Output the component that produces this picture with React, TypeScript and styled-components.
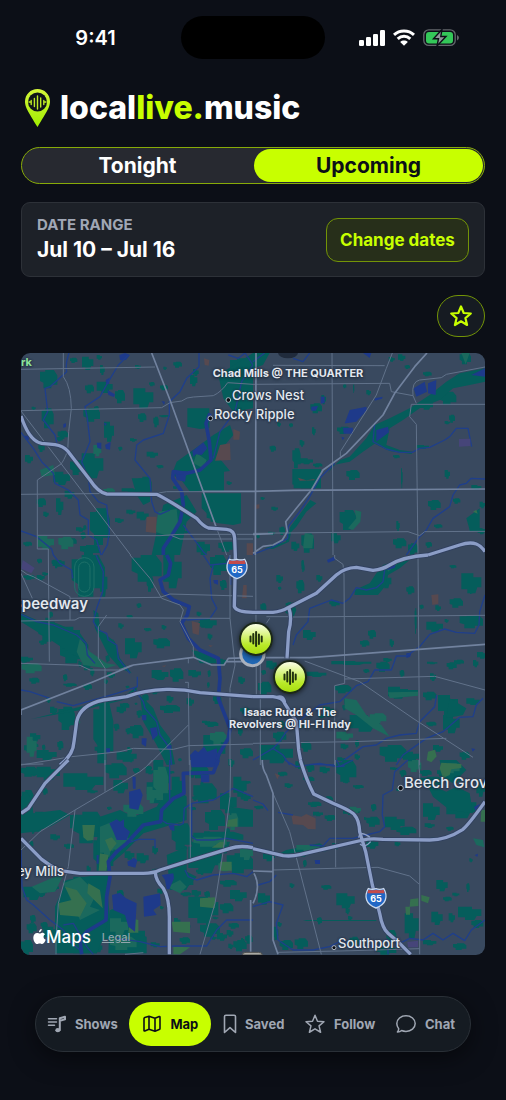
import React, { useState } from "react";
import styled, { createGlobalStyle } from "styled-components";

const LIME = "#c8ff00";

const GlobalStyle = createGlobalStyle`
  * { box-sizing: border-box; }
  body {
    margin: 0;
    background: #0c0f17;
    color: #fff;
    font-family: Inter, "Liberation Sans", sans-serif;
  }
  button { font-family: inherit; cursor: pointer; }
`;

const Screen = styled.div`
  min-height: 100vh;
  display: flex;
  flex-direction: column;
`;

const StatusBar = styled.div`
  display: grid;
  grid-template-columns: 1fr 144px 1fr;
  align-items: center;
  height: 75px;
`;

const Clock = styled.time`
  font-size: 20px;
  font-weight: 600;
  line-height: 24px;
  text-align: center;
  padding-left: 10px;
`;

const Island = styled.div`
  height: 43px;
  border-radius: 22px;
  background: #000;
`;

const Indicators = styled.div`
  display: flex;
  align-items: center;
  justify-content: center;
  gap: 8px;
  padding-right: 14px;
`;

const Header = styled.header`
  display: flex;
  align-items: center;
  gap: 10px;
  padding: 14px 25px 0;
`;

const Wordmark = styled.h1`
  margin: 0;
  font-size: 32px;
  line-height: 38px;
  font-weight: 800;
  span { color: ${LIME}; }
`;

const Main = styled.main`
  display: flex;
  flex-direction: column;
  padding: 20px 21px 0;
`;

const Segmented = styled.div`
  display: grid;
  grid-template-columns: 1fr 1fr;
  gap: 2px;
  height: 37px;
  padding: 1px;
  border: 1px solid #88ab08;
  border-radius: 19px;
  background: #272930;
`;

const Segment = styled.button<{ $active: boolean }>`
  border: 0;
  border-radius: 17px;
  padding: 0;
  background: ${(p) => (p.$active ? LIME : "transparent")};
  color: ${(p) => (p.$active ? "#0c0f17" : "#fff")};
  font-size: 21px;
  line-height: 24px;
  font-weight: 700;
`;

const DateCard = styled.section`
  display: flex;
  align-items: center;
  justify-content: space-between;
  margin-top: 18px;
  height: 75px;
  padding: 0 15px;
  border: 1px solid #2d3138;
  border-radius: 9px;
  background: #1d2128;
`;

const DateLabel = styled.div`
  color: #a0a7b5;
  font-size: 15px;
  line-height: 20px;
  font-weight: 700;
`;

const DateValue = styled.div`
  font-size: 21px;
  line-height: 30px;
  font-weight: 700;
`;

const ChangeButton = styled.button`
  height: 44px;
  width: 143px;
  border: 1px solid #739407;
  border-radius: 12px;
  background: #272f1a;
  color: ${LIME};
  font-size: 17px;
  font-weight: 700;
  padding: 0;
`;

const FavouriteButton = styled.button`
  display: flex;
  align-items: center;
  justify-content: center;
  align-self: flex-end;
  margin: 18px 0 16px;
  width: 48px;
  height: 42px;
  padding: 0;
  border: 1px solid #739407;
  border-radius: 21px;
  background: #161b22;
  color: ${LIME};
`;

const MapFrame = styled.section`
  position: relative;
  aspect-ratio: 464 / 602;
  overflow: hidden;
  border-radius: 9px;
  background: #39495f;
`;

const MapArt = styled.svg`
  display: block;
  width: 100%;
  height: 100%;
`;

const across = (x: number) => `${(x / 464) * 100}%`;
const down = (y: number) => `${(y / 602) * 100}%`;

type Anchor = "start" | "middle" | "end";
const shift = { start: "0", middle: "-50%", end: "-100%" };

const Place = styled.span<{ $x: number; $y: number; $anchor?: Anchor; $size?: number }>`
  position: absolute;
  left: ${(p) => across(p.$x)};
  top: ${(p) => down(p.$y)};
  transform: translate(${(p) => shift[p.$anchor ?? "start"]}, -50%);
  white-space: nowrap;
  color: #e3e8ef;
  font-size: ${(p) => p.$size ?? 13}px;
  line-height: 16px;
  font-weight: 500;
  text-shadow: 0 0 2px #263347, 0 0 2px #263347, 0 1px 2px #263347;
`;

const TownName = styled(Place)`
  font-weight: 600;
`;

const ParkName = styled(Place)`
  color: #8ce49a;
  font-weight: 700;
`;

const VenueName = styled(Place)`
  line-height: 12px;
  font-weight: 700;
  text-align: center;
  text-shadow: 0 0 3px #1d2839, 0 1px 3px #1d2839;
`;

const VenuePin = styled.button<{ $x: number; $y: number }>`
  position: absolute;
  left: ${(p) => across(p.$x)};
  top: ${(p) => down(p.$y)};
  transform: translate(-50%, -50%);
  display: flex;
  align-items: center;
  justify-content: center;
  width: 34px;
  height: 34px;
  padding: 0;
  border: 2px solid #1b2818;
  border-radius: 50%;
  background: linear-gradient(#fbffe6, #b9ea28 70%, #a8dd10);
  box-shadow: 0 1px 5px rgba(0, 0, 0, 0.6);
`;

const MapCredit = styled.div`
  position: absolute;
  left: 12px;
  bottom: 6px;
  display: flex;
  align-items: center;
  font-size: 17px;
  line-height: 24px;
  font-weight: 500;
`;

const LegalLink = styled.a`
  margin-left: 11px;
  color: #91a5ac;
  font-size: 11px;
  line-height: 16px;
`;

const TabBar = styled.nav`
  display: flex;
  align-items: center;
  justify-content: space-between;
  margin: 41px 35px 49px;
  height: 56px;
  padding: 0 7px 0 3px;
  border: 1px solid #2a3037;
  border-radius: 28px;
  background: #151b22;
  box-shadow: 0 6px 24px rgba(0, 0, 0, 0.5);
`;

const Tab = styled.button<{ $active: boolean }>`
  display: flex;
  align-items: center;
  gap: 8px;
  height: 44px;
  padding: ${(p) => (p.$active ? "0 13px" : "0 8px")};
  border: 0;
  border-radius: 22px;
  background: ${(p) => (p.$active ? LIME : "transparent")};
  color: ${(p) => (p.$active ? "#0c0f17" : "#a0a7b3")};
  font-size: 13px;
  line-height: 16px;
  font-weight: 700;
`;

const STAR = "M12 2.5 L14.7 9 L21.8 9.5 L16.4 14.1 L18.1 21 L12 17.3 L5.9 21 L7.6 14.1 L2.2 9.5 L9.3 9Z";

const StarIcon = ({ size, weight }: { size: number; weight: number }) => (
  <svg width={size} height={size} viewBox="0 0 24 24" fill="none" stroke="currentColor" strokeWidth={weight} strokeLinejoin="round">
    <path d={STAR} />
  </svg>
);

const Bars = () => (
  <svg width="14" height="18" viewBox="0 0 14 18" stroke="#20300f" strokeWidth="2" strokeLinecap="round">
    <path d="M1.5 6.5v5M4.3 4v9.5M7.1 2v14M9.9 4.5v9.5M12.7 6.5v5" />
  </svg>
);

const ShowsIcon = () => (
  <svg width="20" height="20" viewBox="0 0 20 20" fill="none" stroke="currentColor" strokeWidth="1.5" strokeLinecap="round">
    <path d="M1.5 4.7h8M1.5 8h8M1.5 11.3h6" />
    <path d="M12.8 16V4.2L18 2.8V5.4L12.8 6.8" strokeWidth="2" strokeLinejoin="round" />
    <ellipse cx="10.8" cy="16.2" rx="2.5" ry="2.1" fill="currentColor" stroke="none" />
  </svg>
);

const MapIcon = () => (
  <svg width="20" height="20" viewBox="0 0 20 20" fill="none" stroke="currentColor" strokeWidth="1.6" strokeLinejoin="round">
    <path d="M2 4.6Q2 3.8 2.8 3.5L7 2.2 13 4.2 17.2 2.5Q18 2.3 18 3.2V14.4Q18 15.3 17.2 15.6L13 17.3 7 15.3 2.8 17Q2 17.2 2 16.4ZM7 2.2V15.3M13 4.2V17.3" />
  </svg>
);

const SavedIcon = () => (
  <svg width="14" height="20" viewBox="0 0 14 20" fill="none" stroke="currentColor" strokeWidth="1.6" strokeLinejoin="round">
    <path d="M1.5 2.6Q1.5 1.2 2.9 1.2H11.1Q12.5 1.2 12.5 2.6V18.5L7 13.6 1.5 18.5Z" />
  </svg>
);

const ChatIcon = () => (
  <svg width="22" height="20" viewBox="0 0 22 20" fill="none" stroke="currentColor" strokeWidth="1.5" strokeLinejoin="round">
    <path d="M11 1.8C16.1 1.8 20.2 5.2 20.2 9.6S16.1 17.4 11 17.4C9.4 17.4 7.9 17.1 6.6 16.5Q4.9 18.1 2.4 18 3.7 16.6 3.7 14.7C2.5 13.3 1.8 11.5 1.8 9.6 1.8 5.2 5.9 1.8 11 1.8Z" />
  </svg>
);

const LogoPin = () => (
  <svg width="25" height="38" viewBox="0 0 25 38">
    <defs>
      <linearGradient id="pin" x1="0" y1="0" x2="0" y2="1">
        <stop offset="0" stopColor="#d5f63a" />
        <stop offset="1" stopColor="#a0ee00" />
      </linearGradient>
    </defs>
    <path d="M12.5 0C19.5 0 25 5.5 25 12.5 25 18 22 22.5 12.5 38 3 22.5 0 18 0 12.5 0 5.5 5.5 0 12.5 0Z" fill="url(#pin)" />
    <circle cx="12.5" cy="13" r="9.5" fill="#10141a" />
    <path d="M6.2 11.5v4M9.4 9.5v8M12.5 7v13M15.7 9v9M18.8 11.5v4M4 13h2M19 13h2" stroke="#bce926" strokeWidth="1.4" strokeLinecap="round" />
  </svg>
);

const SignalIcon = () => (
  <svg width="26" height="17" viewBox="0 0 26 17" fill="#fff">
    <rect x="0" y="11" width="5" height="6" rx="1.3" />
    <rect x="7" y="8" width="5" height="9" rx="1.3" />
    <rect x="14" y="5" width="5" height="12" rx="1.3" />
    <rect x="21" y="1" width="5" height="16" rx="1.3" />
  </svg>
);

const WifiIcon = () => (
  <svg width="22" height="17" viewBox="0 0 22 17" fill="none" stroke="#fff" strokeWidth="3">
    <path d="M1 5.8C6.5.6 15.5.6 21 5.8M4.7 9.8C8.4 6.4 13.6 6.4 17.3 9.8" />
    <path d="M7.2 12.9C9.3 11 12.7 11 14.8 12.9L11 16.8Z" fill="#fff" stroke="none" />
  </svg>
);

const BatteryIcon = () => (
  <svg width="36" height="18" viewBox="0 0 36 18">
    <rect x=".8" y=".8" width="31.4" height="15.6" rx="5" fill="none" stroke="#63676c" strokeWidth="1.3" />
    <rect x="3" y="3" width="27" height="11.4" rx="3" fill="#34c759" />
    <path d="M34 6v5.5Q36 10.5 36 8.7 36 7 34 6Z" fill="#63676c" />
    <path d="M19 .5L10.5 9.7h5L14 17l9-9.5h-5.2Z" fill="#8f9599" stroke="#0c0f17" strokeWidth="1.4" />
  </svg>
);

const AppleMark = () => (
  <svg width="13" height="16" viewBox="0 0 13 16" fill="#fff">
    <path d="M8.7 0C8.8 1.7 7.5 3.2 6 3.3 5.8 1.7 7.2.2 8.7 0ZM9.2 3.7C10.4 3.7 11.5 4.4 12.1 5.3 9.8 6.7 10.2 9.8 12.7 10.8 12.1 12.6 10.7 15 9.2 15 8.2 15 7.9 14.4 6.7 14.4S5 15 4.1 15C2.2 15 .3 11.6.3 8.7.3 5.7 2.2 4 4.1 4 5.3 4 6.1 4.6 6.8 4.6 7.4 4.6 8.4 3.7 9.2 3.7Z" />
  </svg>
);

/* Each sector of the city carries its own parks, water and roads. */
type Block = [number, number, number, number];
type Sector = {
  at: [number, number];
  parks: Block[];
  parkShapes: string;
  meadows: Block[];
  meadowShapes: string;
  olive: string;
  rust: string;
  lakes: string;
  creeks: string;
  river: string;
  minor: string;
  major: string;
  highway: string;
};

const blockPath = (blocks: Block[]) =>
  blocks
    .map(([x, y, w, h], i) =>
      i % 2
        ? `M${x} ${y}h${w * 0.6}v${h * 0.2}h${w * 0.4}v${h * 0.5}h${-w * 0.2}l${-w * 0.1} ${h * 0.3}h${-w * 0.4}v${-h * 0.2}h${-w * 0.3}z`
        : `M${x} ${y + h * 0.1}h${w * 0.3}v${-h * 0.1}h${w * 0.5}l${w * 0.2} ${h * 0.3}v${h * 0.5}h${-w * 0.35}v${h * 0.2}h${-w * 0.45}v${-h * 0.3}l${-w * 0.2} ${-h * 0.1}z`
    )
    .join("");

const sectors: Sector[] = [
  {
    at: [0, 1035],
    parks: [[120, 75, 52, 55], [246, 35, 34, 40], [210, 38, 22, 16], [290, 110, 48, 34], [345, 135, 30, 40], [400, 130, 60, 60], [250, 190, 50, 40], [312, 230, 30, 60], [125, 190, 36, 60], [245, 325, 65, 75], [210, 345, 40, 45], [365, 430, 60, 12], [110, 460, 28, 26], [168, 460, 22, 50], [415, 395, 40, 55], [345, 520, 26, 14], [70, 590, 26, 14], [130, 500, 16, 16], [470, 360, 20, 10], [300, 60, 14, 30], [355, 305, 12, 12], [440, 320, 34, 18], [480, 120, 24, 16], [405, 60, 18, 12], [520, 50, 26, 18], [570, 90, 22, 34], [690, 40, 69, 50], [650, 320, 26, 16], [460, 215, 16, 32], [160, 380, 50, 40], [270, 490, 60, 110], [410, 500, 36, 26], [620, 500, 60, 30], [590, 590, 40, 40], [655, 590, 50, 30], [290, 30, 16, 14], [240, 600, 60, 30], [490, 65, 10, 10], [170, 275, 18, 14], [95, 185, 12, 10], [200, 580, 30, 20], [390, 280, 20, 10]],
    parkShapes: "M562 190H628V248L600 252 562 245ZM605 445H723V535L700 540 650 534 605 490ZM530 350L600 300 640 270 690 240 700 270 650 330 690 378 672 380V437H600L570 440 540 400 515 390ZM490 480L560 450 590 500 560 530 540 630H455L470 560ZM395 400H450V470L430 480 410 450ZM655 90L759 24V190L700 200 670 160Z",
    meadows: [[310, 430, 35, 20], [280, 300, 24, 34], [175, 575, 45, 38], [112, 573, 50, 40]],
    meadowShapes: "M475 500L530 492 535 540 510 575 465 560ZM120 375L160 360 165 390 125 395ZM590 325L620 345 610 370 580 355Z",
    olive: "",
    rust: "M660 300L690 295 692 345 645 347ZM700 252L720 260 718 284H700ZM440 515L470 515 468 565 437 560ZM612 40L628 45 626 62 614 60ZM740 595h19v35h-19z",
    lakes: "M358 30L375 24 390 30 378 45 360 46ZM290 293l14 0 0 20-12-5zM315 300L332 290 330 314 318 312ZM322 135L345 148 342 156 325 150ZM317 105L328 98 328 116 319 118ZM577 318L610 292 622 310 605 330 588 328 580 335ZM525 385L560 378 555 410 530 405ZM190 237l8-2 0 10-8 4zM312 233l9 3-6 7zM75 272l12 0 0 12-10 0zM485 168l10 2-3 10z",
    creeks: "M207 24Q195 60 200 80L150 125 135 130 143 200 130 225 165 270 172 300M385 30L355 60 325 110 300 155 255 185 262 220 270 290 245 350 265 400 270 440 295 470 320 480 328 560 322 600 305 630M597 24V65L560 100 540 140 508 170V210L490 265 430 285 410 300 405 345 450 400 455 470 465 500 480 508 510 495M63 262L100 310 125 350 160 385 165 415 205 435 235 465 240 510 265 525V570L290 585 303 630M63 558L110 575 155 612 160 630M550 540L580 580 610 620 620 630M685 30L715 40 735 24M735 24L759 60 725 110 705 200 660 260 640 340",
    river: "M630 205L618 235 628 290 633 345 600 375 560 385 520 380 518 400 545 440 550 480 540 530 510 580 490 610V630",
    minor: "M63 73L465 66M190 24V95Q213 125 214 190L206 260 203 318Q190 350 183 357L112 405V612H145V630M63 197L485 188 510 173 545 168Q560 156 580 156L640 152Q665 140 683 113L759 118M63 198L392 630M63 448L475 444 500 440H610M112 571L480 572 540 568H759M515 572L540 582H759M648 545L680 630",
    major: "M455 24L510 165 648 545M610 439H759",
    highway: "M63 213C75 250 95 290 125 295L165 299Q190 303 203 318L270 405Q295 443 320 447L470 448Q500 462 590 520 610 545 625 549L680 553Q704 556 704 580L706 630",
  },
  {
    at: [759, 1035],
    parks: [[172, 175, 35, 30], [205, 150, 14, 28], [118, 310, 25, 60], [140, 340, 40, 18], [180, 355, 28, 12], [118, 372, 86, 58], [260, 495, 50, 60], [235, 565, 28, 30], [145, 565, 38, 58], [115, 590, 24, 28], [420, 580, 40, 30], [430, 528, 10, 30], [525, 465, 38, 30], [575, 375, 16, 26], [280, 375, 40, 30], [500, 170, 40, 24], [560, 140, 50, 40], [575, 228, 16, 10], [600, 460, 22, 16], [655, 420, 30, 14], [510, 80, 26, 14], [340, 135, 14, 16], [455, 60, 16, 12], [650, 550, 45, 10], [108, 235, 12, 12], [140, 285, 14, 20], [300, 118, 4, 26], [444, 370, 5, 60], [10, 570, 10, 10], [45, 560, 22, 10], [620, 24, 34, 34], [435, 28, 22, 20], [420, 330, 20, 10], [490, 300, 38, 12], [465, 595, 30, 34], [55, 485, 20, 12], [252, 245, 40, 22], [680, 470, 16, 20]],
    parkShapes: "M120 372H204V430H122ZM98 590L112 545 172 465 190 475 160 500 130 545 115 560 108 590 60 612 35 610ZM225 385L240 365 262 345 290 335 340 280 365 240 410 220 470 190 530 150 580 110 620 85 696 70V110L650 120 600 130 560 165 500 190 450 225 410 250 400 300 440 315 480 320 475 327 410 318 365 296 330 320 290 350 240 360ZM640 520L680 490V555H650ZM0 24L50 24 30 60 0 70Z",
    meadows: [],
    meadowShapes: "M305 495L325 500 322 530 300 555 285 550 310 520ZM155 565L182 570 178 610 150 610ZM625 24L650 24 638 58Z",
    olive: "M660 500l10-6 4 12z",
    rust: "M135 398L160 406 185 402 183 406 140 407ZM5 480l14-2 0 12-14 3z",
    lakes: "M275 235L290 195 340 185 342 195 310 230 280 235ZM482 130L515 110 522 140 490 155ZM525 115L550 105 548 150 525 145ZM270 248H300V266H272ZM175 185l20-2-6 14-14 0zM203 155l12 0 0 18-12 3zM365 160l24-5-2 6-22 6zM370 255L405 245 408 262 370 290ZM655 90L696 70V95ZM265 275l10 3-6 8zM330 24h25l-5 15z",
    creeks: "M365 240L360 290 400 312 440 322 478 322 500 310 530 307 575 285 590 275 610 250H645L656 305M696 402L655 400 640 415 620 420 600 450 590 485 540 520 520 555 500 575 460 630M120 40L150 50 170 24M245 355L200 400 170 455 140 500 105 545 104 580 58 606 0 628M0 50L35 24",
    river: "",
    minor: "M237 24L240 630M418 24L400 70 370 150 262 320V335M0 118L410 115 415 140 480 152 490 175M480 152Q475 110 500 105L565 98 580 88 696 66M475 178H696M475 178L470 215 490 238 495 630M60 61L395 62M0 565L465 560 500 572 515 560 696 559M100 540L98 530",
    major: "M522 24L485 65 425 145 390 210 280 325 210 375 175 435 130 490 98 530 103 560 88 585 60 600 30 604 0 625M9 24L7 630M0 439L118 436 696 432M0 568L60 566",
    highway: "M525 630L620 600Q650 590 670 597 685 603 696 620",
  },
  {
    at: [0, 1665],
    parks: [[215, 0, 100, 125], [300, 50, 22, 75], [115, 200, 60, 60], [190, 215, 50, 50], [180, 265, 80, 60], [375, 250, 50, 60], [395, 0, 90, 80], [490, 0, 55, 100], [280, 445, 60, 180], [455, 345, 50, 30], [510, 340, 40, 40], [565, 345, 38, 22], [175, 455, 50, 70], [110, 585, 60, 30], [85, 565, 30, 14], [350, 455, 28, 20], [390, 510, 40, 40], [350, 590, 60, 30], [460, 250, 50, 30], [355, 205, 16, 16], [410, 145, 14, 14], [485, 210, 14, 14], [70, 60, 36, 14], [110, 60, 24, 16], [145, 170, 14, 18], [600, 190, 50, 30], [615, 500, 40, 16], [610, 540, 66, 80], [630, 0, 50, 60], [560, 430, 22, 22], [720, 580, 39, 30], [715, 365, 20, 22], [190, 385, 40, 10], [150, 455, 22, 24], [480, 450, 60, 24], [590, 170, 14, 14], [380, 180, 18, 10], [63, 305, 36, 15], [660, 75, 20, 30], [170, 15, 24, 20], [440, 60, 20, 50]],
    parkShapes: "M63 175L110 195 170 205 240 235 265 270 265 315 220 300 160 260 63 200ZM280 165L295 175 300 225 345 260 360 310 395 355 360 340 325 300 285 220ZM95 492L300 440 370 425 410 395 410 410 370 435 270 460ZM420 420L460 460 480 510 510 550 525 628 500 630 470 570 430 500ZM575 285L645 300 650 325 600 325Z",
    meadows: [[65, 325, 60, 30], [80, 545, 30, 60], [630, 530, 50, 40]],
    meadowShapes: "M240 250L270 290 320 325 350 330 320 340 250 330 230 290ZM225 485l12-6 4 24-14 8z",
    olive: "",
    rust: "M575 198L600 205 596 240 578 235ZM625 270l14 2-8 4zM730 90h10v40h-14zM485 333l14-2-6 5z",
    lakes: "M570 600L585 585 595 592 612 575 622 590 650 580 655 630H575ZM425 480h14v16h-12zM450 520l20-4 4 24-16 16zM425 550l15 0-2 25-13-8zM318 580h12v14h-10zM500 570l14 0 0 14-14-2zM640 75l14 0 0 14-12-4zM690 60l4 0 0 30-4 0z",
    creeks: "M160 0L180 25 215 45 218 70M63 178L110 200 160 210 230 240 258 265 262 300 285 325M288 0L310 50 308 110 290 160 280 200 295 225 320 235 325 255 350 270 355 310 390 355M63 405L90 410 150 430M170 440L220 452 350 415 412 395V365M400 400L430 440 435 460 470 500 480 540 510 580 515 630M640 30L630 70 635 130 650 160 630 190 560 195M610 0L630 30 680 25 690 0",
    river: "M500 0L512 25 505 60 480 75 490 110 520 135 568 155 562 180 545 205 565 250 600 285 655 310 660 370 655 430 690 520 685 550 655 600 650 630",
    minor: "M145 0L148 320M63 45Q80 60 100 65L210 125V195M63 55L97 130M210 130L480 127 510 117 759 124M390 0L450 70 485 130 540 150 550 165 540 200 580 275V305M63 198L225 195 238 188 690 190V0M320 180L295 215V310L315 340V630M63 325L240 331 270 345H355L395 330M565 310V325M555 382H565V395L568 630M445 630L565 510M63 630L215 605 360 590 400 580 520 583 565 572 759 567M690 190L705 330 690 400V630",
    major: "M63 465L280 380 400 330 580 307 635 330H672L685 310 759 308M63 465V480M680 320H759",
    highway: "M706 0V30L703 155Q710 172 759 172M180 630Q220 600 222 560L230 500Q240 450 310 435L380 425Q430 405 500 403 550 402 600 413L759 425",
  },
  {
    at: [759, 1665],
    parks: [[130, 75, 24, 40], [190, 60, 18, 20], [145, 15, 8, 26], [70, 60, 20, 24], [75, 95, 10, 10], [150, 225, 38, 30], [345, 225, 24, 26], [625, 55, 60, 60], [590, 130, 40, 28], [235, 318, 120, 12], [485, 160, 6, 76], [520, 200, 50, 30], [620, 180, 70, 40], [405, 395, 60, 36], [440, 345, 14, 22], [555, 420, 60, 60], [510, 410, 40, 26], [570, 480, 50, 55], [380, 570, 80, 50], [290, 480, 90, 50], [245, 390, 50, 25], [20, 570, 100, 55], [145, 560, 30, 30], [540, 570, 30, 20], [620, 590, 30, 24], [660, 315, 16, 22], [60, 530, 40, 30], [450, 590, 50, 30], [15, 380, 40, 40], [210, 455, 34, 30], [520, 500, 30, 14], [160, 350, 60, 16], [370, 320, 40, 30], [385, 60, 30, 40], [590, 30, 20, 10], [640, 430, 40, 20], [25, 345, 14, 14]],
    parkShapes: "M305 105L350 85 370 55 390 30 420 20 470 15 440 40 405 60 395 95 375 120H305ZM95 170L120 140 130 165 120 190ZM420 405H495V420L420 430ZM590 430L640 460 630 480 580 490Z",
    meadows: [[350, 475, 50, 30], [250, 530, 50, 26]],
    meadowShapes: "M405 412L495 410V422L410 430ZM275 430L310 435 340 480 385 510 410 545 360 520 310 480 275 460ZM400 30L435 25 405 50Z",
    olive: "M525 590l20-6 6 20-16 18-14-6z",
    rust: "M535 120L556 118 556 146 538 150ZM463 303l14-10-6 14z",
    lakes: "M395 35L430 22 425 38 405 45ZM222 15l20-10 5 10-22 8zM460 295l16-2-4 12-12 4zM655 580l12 2-8 8z",
    creeks: "M430 24L395 45 390 80 370 98 340 105 310 98 290 130 270 145 235 135 170 160 165 200 130 240 120 270M696 120L680 170 678 210 665 235 610 232 575 222 530 238 500 275 460 303H430L415 345H365L345 380 310 392 260 440 200 450 160 480 110 475M160 480L100 530 80 560 60 580 0 615M551 420L545 455 500 500 490 535 440 540 400 550 370 570 330 575 260 625M170 628L250 630M690 430L670 450 660 485 620 487 570 530 520 550 450 600 430 630M60 580L90 600 110 630",
    river: "",
    minor: "M245 0V10L270 28 273 60 275 385 245 392V630M495 0L500 630M155 318L320 380 480 490 660 607M275 372L545 364 696 405M40 185H110L120 186 696 181M0 565L300 560 580 550M8 0L10 420M22 320V630M50 190L40 205",
    major: "M38 308H170L340 295 696 268",
    highway: "M0 172H60Q85 170 105 158L190 115 250 60Q275 38 310 37L360 46Q390 43 410 30 450 5 525 0M108 160Q118 190 107 230L102 310M0 425H60Q90 428 95 445L130 500 137 585Q142 615 147 630M72 427Q92 420 95 445",
  },
  {
    at: [0, 2280],
    parks: [[63, 20, 50, 30], [110, 20, 70, 40], [65, 90, 36, 50], [190, 40, 120, 50], [315, 10, 65, 45], [340, 60, 44, 40], [90, 155, 50, 60], [210, 165, 70, 50], [220, 155, 90, 95], [460, 0, 50, 100], [440, 60, 60, 70], [515, 50, 40, 60], [580, 70, 70, 60], [660, 100, 50, 60], [615, 150, 60, 60], [700, 50, 40, 60], [580, 215, 150, 30], [565, 260, 100, 80], [680, 280, 79, 60], [565, 410, 90, 80], [600, 490, 60, 40], [690, 390, 50, 34], [190, 350, 100, 120], [165, 440, 180, 140], [280, 230, 60, 110], [70, 380, 60, 40], [80, 490, 30, 30], [130, 500, 50, 40], [63, 540, 36, 45], [355, 495, 80, 85], [660, 430, 40, 30], [510, 340, 70, 50], [515, 190, 60, 80], [680, 510, 20, 20], [700, 540, 40, 34], [410, 280, 36, 30], [575, 15, 50, 40], [120, 390, 20, 14], [660, 360, 50, 20]],
    parkShapes: "M300 170L360 150 400 170 470 140 500 90H540L560 110V180L530 190 430 220 370 280 335 310 320 380 330 470 290 580H165V440L200 360 290 345 290 250ZM500 285L560 260V335L590 350 560 385 510 390ZM330 450H400V520L440 530V580H325ZM63 110L80 95 95 120 100 160 180 150 210 165 150 200 100 215 63 220ZM575 245H690L680 280 600 285 575 300ZM690 140L759 150V200H690Z",
    meadows: [[460, 20, 45, 100], [440, 80, 30, 50], [370, 130, 60, 40], [300, 230, 40, 60], [580, 230, 100, 30], [655, 310, 40, 24], [685, 160, 30, 50], [330, 475, 55, 50], [330, 530, 80, 40], [720, 260, 39, 40]],
    meadowShapes: "M300 200L350 180 350 220 400 240 350 270 300 260ZM190 370L240 350 290 400 270 440 300 450 240 480ZM165 350L190 345 165 395 120 400 95 380ZM500 380L540 360 560 380 540 400Z",
    olive: "M247 195L285 195 280 240 262 242 250 232ZM195 380L230 390 260 430 240 470 180 465 175 430 215 420ZM300 280L325 285 318 345H295ZM315 240L335 232 350 250 330 275ZM265 370L300 390 308 445 262 400ZM600 415L645 412V445L600 440ZM515 485H570V520L520 515ZM390 475L415 480V518H385ZM520 560L570 562 540 583H520ZM660 245h12v18H635zM660 305H695V332H660ZM685 180L712 175V200H680Z",
    rust: "",
    lakes: "M387 95L420 86 428 105 415 150 388 145ZM328 190L350 178 360 185 372 178V200L390 215 380 240H350L340 215ZM336 405L360 398 378 415 410 430 405 515 385 500 375 465 340 450ZM430 410L480 400 482 435 460 450 470 465 432 470ZM570 0H655L640 22H575ZM602 45h26v22h-24zM397 50h10v36h-8zM485 345L520 340 522 355 508 388H500L495 360ZM290 285h6v26h-6zM382 305l20-12 10 8-6 22-22-6zM505 195h18v18l-12-4z",
    creeks: "M509 0V120M759 110L700 85 640 120 575 130 553 145 550 190 540 195 500 190 485 180M575 130V230L590 240H640L680 235 759 250M465 265V238H415L380 250 350 280M63 270L66 380 80 420 100 435 150 480 190 510 215 550 240 570M190 495L220 490 260 560 280 583M350 535L420 545 480 560 530 558H620L650 510 680 480 759 480M555 330L565 350 590 360 640 345 700 340 740 350 759 335",
    river: "M655 0L640 38 550 40 552 100 520 115 485 150 482 185 430 195 380 250 350 275 325 305 330 350 320 410 318 480 260 515 240 540 245 583",
    minor: "M63 13L130 12M315 0V95M457 0Q440 22 420 35L225 150 120 215 63 270M225 150L205 320 175 430 168 540V583M570 0L571 300M692 0L690 110 670 270 645 430 600 583M375 583L430 578",
    major: "M752 420V575",
    highway: "M205 0L135 70 85 145 63 160M63 235L125 298Q150 318 180 332L240 340H430Q460 340 480 330L560 305 690 265Q720 255 759 263M466 338Q467 362 490 385 508 415 508 470V583",
  },
  {
    at: [759, 2280],
    parks: [[250, 0, 60, 65], [270, 60, 20, 10], [150, 50, 34, 16], [95, 70, 24, 14], [75, 35, 28, 14], [200, 20, 30, 20], [165, 125, 40, 16], [180, 155, 30, 14], [215, 165, 34, 18], [270, 145, 50, 20], [340, 170, 40, 30], [395, 170, 60, 40], [430, 200, 60, 25], [340, 240, 36, 26], [500, 50, 70, 30], [510, 130, 50, 50], [500, 30, 36, 18], [580, 115, 90, 60], [440, 30, 20, 20], [515, 190, 30, 14], [580, 200, 22, 12], [250, 400, 55, 45], [205, 375, 30, 14], [455, 460, 42, 75], [400, 510, 30, 40], [550, 360, 34, 34], [640, 370, 10, 26], [535, 455, 34, 40], [570, 410, 26, 14], [615, 440, 70, 40], [655, 480, 36, 24], [30, 270, 36, 34], [125, 535, 40, 32], [60, 500, 16, 40], [80, 540, 40, 30], [15, 400, 36, 34], [290, 530, 28, 30], [510, 540, 40, 16], [600, 550, 40, 20], [110, 370, 14, 14], [140, 270, 26, 20], [670, 60, 26, 50], [370, 560, 60, 24]],
    parkShapes: "M520 70L580 95 610 80 650 100 660 160 590 150 540 110ZM560 0H610L640 30 600 70 570 50ZM150 480H370V483H160ZM0 270L60 290 100 270 200 250 220 262 90 285Z",
    meadows: [[465, 0, 40, 36], [130, 255, 70, 18], [570, 10, 50, 30], [290, 140, 34, 20]],
    meadowShapes: "M660 235L690 240 694 262 670 255Z",
    olive: "M565 8L625 12 625 24 595 28 590 45 570 54 560 25ZM505 405L530 412 525 430 505 422ZM472 418L496 415V438L470 440ZM457 440h14v24h-12zM685 150h11v35h-13z",
    rust: "M115 165L145 170 160 162 188 175V208L165 207 150 195 120 193ZM65 40l14 6-6 12z",
    lakes: "M185 300h16v12h-14zM665 285l10-4-2 10zM663 140l18-8v14l-14 6z",
    creeks: "M0 120L30 132 45 152M75 157L120 165M250 0L260 20 300 0M95 0L130 20 200 10 250 20 275 18M465 0L425 35 418 90 390 105 388 165 395 200 380 215 340 225 300 235H230L210 258 170 255M0 440L50 425 90 435 70 490 75 540 120 570 180 570 230 560 270 540 290 560 330 560 380 555 400 540 440 550 470 535 510 540 540 520 570 540 600 520 635 542 655 510 696 480M15 375L50 365 70 345M405 583V560",
    river: "",
    minor: "M247 0L248 322M498 0V20L500 40V583M60 100L110 215 205 583M60 330L240 325 375 322 470 348 498 372M75 577L300 572 500 566",
    major: "M28 0Q27 25 40 45L60 100V540L75 583M0 333L60 335M3 340Q25 380 0 430",
    highway: "M142 0Q160 60 182 102L240 130Q300 155 306 167 318 180 320 215L338 275 358 375 380 460Q388 505 405 520L440 550 473 583M0 266L90 287Q115 290 140 284L330 240Q350 235 390 238L530 240Q580 240 630 208 650 190 696 125",
  },
];

/* Small pockets of green between the named parks, thicker to the south-west. */
const pockets = (() => {
  let seed = 23;
  const next = () => {
    seed = (seed * 16807) % 2147483647;
    return seed / 2147483647;
  };
  const blocks: Block[] = [];
  for (let i = 0; i < 210; i++) {
    const dense = i < 90;
    const x = 63 + next() * (dense ? 680 : 1370);
    const y = (dense ? 1950 : 1070) + next() * (dense ? 900 : 1780);
    blocks.push([Math.round(x), Math.round(y), Math.round(8 + next() * 24), Math.round(7 + next() * 20)]);
  }
  return blockPath(blocks);
})();

const Shield = ({ x, y }: { x: number; y: number }) => (
  <g transform={`translate(${x} ${y})`}>
    <path d="M-23-28Q-11-24 0-28 11-24 23-28Q34-10 28 6 22 22 0 30-22 22-28 6-34-10-23-28Z" fill="#2167c5" stroke="#c9d8ed" strokeWidth="4" />
    <path d="M-23-25Q-11-22 0-25 11-22 23-25L26-14H-26Z" fill="#c34b4b" />
    <text x="0" y="13" textAnchor="middle" fill="#fff" fontSize="27" fontWeight="700">65</text>
  </g>
);

const SectorGround = ({ s }: { s: Sector }) => (
  <g transform={`translate(${s.at[0]} ${s.at[1]})`}>
    <path d={blockPath(s.parks)} fill="#055d5b" />
    <path d={s.parkShapes} fill="#055d5b" />
    <path d={blockPath(s.meadows) + s.meadowShapes} fill="#1b695d" />
    <path d={s.olive} fill="#35704f" />
    <path d={s.rust} fill="#57494f" />
    <path d={s.lakes} fill="#1e3a8a" />
    <g fill="none" strokeLinejoin="round">
      <path d={s.creeks} stroke="#1f3f8b" strokeWidth="4" />
      <path d={s.river} stroke="#1e3a8a" strokeWidth="11" />
    </g>
  </g>
);

const SectorRoads = ({ s }: { s: Sector }) => (
  <g transform={`translate(${s.at[0]} ${s.at[1]})`} fill="none" strokeLinejoin="round">
    <path d={s.minor} stroke="#61728a" strokeWidth="3" />
    <path d={s.major} stroke="#71829e" strokeWidth="5" />
    <path d={s.highway} stroke="#31415f" strokeWidth="15" />
    <path d={s.highway} stroke="#8b9dc6" strokeWidth="10" />
  </g>
);

const CityMap = () => (
  <MapArt viewBox="63 1059 1392 1806" role="img" aria-label="Map of Indianapolis">
    <path d={pockets} fill="#055d5b" />
    {sectors.map((s) => (
      <SectorGround key={s.at.join()} s={s} />
    ))}
    <g fill="none" stroke="#1e7169" strokeWidth="3">
      <rect x="224" y="1673" width="58" height="116" rx="28" />
      <rect x="236" y="1686" width="34" height="90" rx="17" />
    </g>
    <path d="M68 1680l36 24-10 16-30-14z" fill="#464579" />
    <path d="M1377 1317l34-1v22l-34 2zM1222 2826l32-4 0 20-30 0z" fill="#464579" />
    {sectors.map((s) => (
      <SectorRoads key={s.at.join()} s={s} />
    ))}
    <path d="M1076 2513Q1080 2490 1110 2512M1080 2532Q1095 2545 1112 2525" fill="none" stroke="#8b9dc6" strokeWidth="4" />
    <ellipse cx="864" cy="1058" rx="30" ry="17" fill="#202b3c" />
    <g stroke="#a9b3c0" strokeWidth="3" fill="#0b0d12">
      <circle cx="685" cy="1200" r="7" />
      <circle cx="631" cy="1255" r="7" />
      <circle cx="1202" cy="2364" r="8" />
      <circle cx="1002" cy="2843" r="6" />
    </g>
    <circle cx="757" cy="1962" r="35" fill="#2167b3" stroke="#aab1bd" strokeWidth="9" />
    <path d="M727 2865Q727 2857 738 2857H775Q787 2857 787 2865Z" fill="#aaa9a4" stroke="#4f504e" strokeWidth="3" />
    <Shield x={711} y={1706} />
    <Shield x={1128} y={2694} />
  </MapArt>
);

const tabs = [
  { name: "Shows", icon: <ShowsIcon /> },
  { name: "Map", icon: <MapIcon /> },
  { name: "Saved", icon: <SavedIcon /> },
  { name: "Follow", icon: <StarIcon size={22} weight={1.6} /> },
  { name: "Chat", icon: <ChatIcon /> },
];

export default function App() {
  const [period, setPeriod] = useState("Upcoming");
  const [tab, setTab] = useState("Map");
  return (
    <Screen>
      <GlobalStyle />
      <StatusBar>
        <Clock>9:41</Clock>
        <Island />
        <Indicators>
          <SignalIcon />
          <WifiIcon />
          <BatteryIcon />
        </Indicators>
      </StatusBar>
      <Header>
        <LogoPin />
        <Wordmark>
          local<span>live.</span>music
        </Wordmark>
      </Header>
      <Main>
        <Segmented>
          {["Tonight", "Upcoming"].map((p) => (
            <Segment key={p} $active={p === period} aria-pressed={p === period} onClick={() => setPeriod(p)}>
              {p}
            </Segment>
          ))}
        </Segmented>
        <DateCard>
          <div>
            <DateLabel>DATE RANGE</DateLabel>
            <DateValue>Jul 10 – Jul 16</DateValue>
          </div>
          <ChangeButton>Change dates</ChangeButton>
        </DateCard>
        <FavouriteButton aria-label="Favourites">
          <StarIcon size={24} weight={2.2} />
        </FavouriteButton>
        <MapFrame>
          <CityMap />
          <ParkName $x={11} $y={9} $anchor="end" $size={11}>Park</ParkName>
          <Place $x={211} $y={42}>Crows Nest</Place>
          <Place $x={193} $y={61}>Rocky Ripple</Place>
          <TownName $x={67} $y={251} $anchor="end" $size={15}>Speedway</TownName>
          <Place $x={383} $y={430} $size={15}>Beech Grove</Place>
          <Place $x={43} $y={518} $anchor="end">Valley Mills</Place>
          <Place $x={317} $y={590}>Southport</Place>
          <VenueName $x={267} $y={20} $anchor="middle" $size={11}>Chad Mills @ THE QUARTER</VenueName>
          <VenueName $x={269} $y={365} $anchor="middle" $size={11}>
            Isaac Rudd &amp; The
            <br />
            Revolvers @ HI-FI Indy
          </VenueName>
          <VenuePin $x={235} $y={286} aria-label="Downtown venue">
            <Bars />
          </VenuePin>
          <VenuePin $x={269} $y={324} aria-label="HI-FI Indy">
            <Bars />
          </VenuePin>
          <MapCredit>
            <AppleMark />
            Maps
            <LegalLink href="#legal">Legal</LegalLink>
          </MapCredit>
        </MapFrame>
      </Main>
      <TabBar>
        {tabs.map((t) => (
          <Tab key={t.name} $active={t.name === tab} onClick={() => setTab(t.name)}>
            {t.icon}
            {t.name}
          </Tab>
        ))}
      </TabBar>
    </Screen>
  );
}
